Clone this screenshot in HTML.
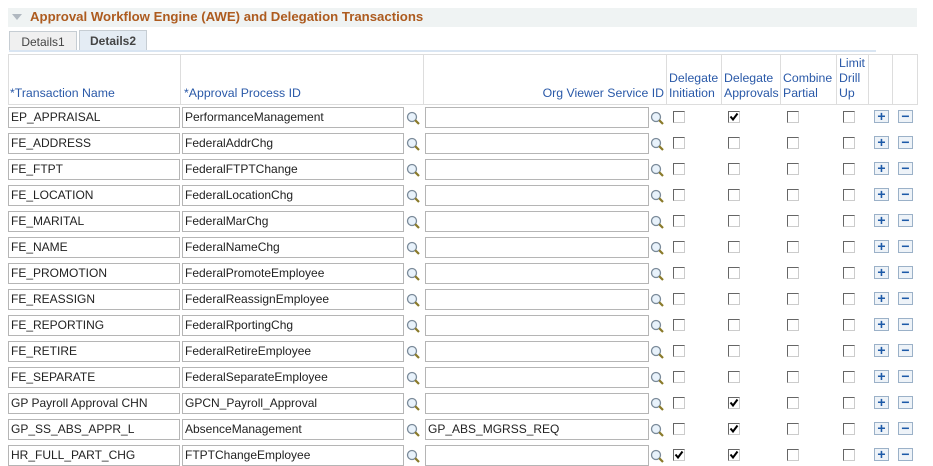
<!DOCTYPE html>
<html><head><style>
body{margin:0;width:933px;height:465px;background:#fff;font-family:"Liberation Sans",Arial,sans-serif;font-size:12px;position:relative;overflow:hidden}
.a{position:absolute}
.bar{left:8px;top:8px;width:909px;height:19px;background:#eff3f3}
.title{left:30px;top:9px;font-weight:bold;font-size:13.2px;color:#ad5b1f}
.tri{left:12px;top:14px;width:0;height:0;border-left:5px solid transparent;border-right:5px solid transparent;border-top:6px solid #b0b8c0}
.tab{top:30px;height:20px;border:1px solid #c6cdd3;border-bottom:none;line-height:20px;font-size:12px;color:#444;text-align:center;box-sizing:border-box}
.hdr{top:54px;height:51px;border:1px solid #ddd;box-sizing:border-box;background:#fff}
.hl{color:#2a59a8;font-size:12.3px;line-height:15px}
.inp{height:21px;border:1px solid #b5b5b5;box-sizing:border-box;padding-left:2px;line-height:19px;color:#222;background:#fff;white-space:nowrap;overflow:hidden}
.cb{width:12px;height:12px;border:1px solid #666;border-right-color:#ccc;border-bottom-color:#ccc;box-sizing:border-box;background:#fff}
.btn{width:15px;height:13px;border:1px solid #9bb1c8;box-sizing:border-box;background:#eef3f8;color:#1d5aa8;font-weight:bold;font-size:14px;line-height:10px;text-align:center}
</style></head><body>
<div class="a bar"></div><div class="a tri"></div>
<div class="a title">Approval Workflow Engine (AWE) and Delegation Transactions</div>
<div class="a tab" style="left:9px;width:68px;background:#f0f0f0;top:31px">Details1</div>
<div class="a tab" style="left:79px;width:68px;background:#e4ecf4;font-weight:bold;color:#444">Details2</div>
<div class="a" style="left:9px;top:50px;width:867px;height:2px;background:#d9e5f2"></div>
<div class="a hdr" style="left:8px;width:910px"></div>
<div class="a" style="left:180px;top:55px;width:1px;height:49px;background:#ddd"></div>
<div class="a" style="left:423px;top:55px;width:1px;height:49px;background:#ddd"></div>
<div class="a" style="left:666px;top:55px;width:1px;height:49px;background:#ddd"></div>
<div class="a" style="left:721px;top:55px;width:1px;height:49px;background:#ddd"></div>
<div class="a" style="left:780px;top:55px;width:1px;height:49px;background:#ddd"></div>
<div class="a" style="left:836px;top:55px;width:1px;height:49px;background:#ddd"></div>
<div class="a" style="left:868px;top:55px;width:1px;height:49px;background:#ddd"></div>
<div class="a" style="left:892px;top:55px;width:1px;height:49px;background:#ddd"></div>
<div class="a hl" style="left:10px;top:86px">*Transaction Name</div>
<div class="a hl" style="left:184px;top:86px">*Approval Process ID</div>
<div class="a hl" style="left:424px;top:86px;width:240px;text-align:right">Org Viewer Service ID</div>
<div class="a hl" style="left:669px;top:71px">Delegate<br>Initiation</div>
<div class="a hl" style="left:724px;top:71px">Delegate<br>Approvals</div>
<div class="a hl" style="left:783px;top:71px">Combine<br>Partial</div>
<div class="a hl" style="left:839px;top:56px">Limit<br>Drill<br>Up</div>
<svg width="0" height="0" style="position:absolute"><defs><g id="mg"><circle cx="6" cy="6" r="4.5" fill="#e8f2fb" stroke="#7a8a99" stroke-width="1.3"/><path d="M9.2 9.2 L13 13" stroke="#8a7a2a" stroke-width="2.2"/></g></defs></svg>
<div id="rows"></div>
<script>
var d=[["EP_APPRAISAL","PerformanceManagement","",0,1],["FE_ADDRESS","FederalAddrChg","",0,0],["FE_FTPT","FederalFTPTChange","",0,0],["FE_LOCATION","FederalLocationChg","",0,0],["FE_MARITAL","FederalMarChg","",0,0],["FE_NAME","FederalNameChg","",0,0],["FE_PROMOTION","FederalPromoteEmployee","",0,0],["FE_REASSIGN","FederalReassignEmployee","",0,0],["FE_REPORTING","FederalRportingChg","",0,0],["FE_RETIRE","FederalRetireEmployee","",0,0],["FE_SEPARATE","FederalSeparateEmployee","",0,0],["GP Payroll Approval CHN","GPCN_Payroll_Approval","",0,1],["GP_SS_ABS_APPR_L","AbsenceManagement","GP_ABS_MGRSS_REQ",0,1],["HR_FULL_PART_CHG","FTPTChangeEmployee","",1,1]];
var h="";
function cb(x,y,c){return '<div class="a cb" style="left:'+x+'px;top:'+y+'px">'+(c?'<svg width="10" height="10" style="position:absolute;left:0;top:0"><path d="M1.5 4.5 L4 7.5 L8.5 1.5" stroke="#000" stroke-width="2" fill="none"/></svg>':'')+'</div>';}
d.forEach(function(r,i){var y=107+26*i;
h+='<div class="a inp" style="left:8px;top:'+y+'px;width:172px">'+r[0]+'</div>';
h+='<div class="a inp" style="left:182px;top:'+y+'px;width:222px">'+r[1]+'</div>';
h+='<svg class="a" style="left:406px;top:'+(y+4)+'px" width="15" height="15"><use href="#mg"/></svg>';
h+='<div class="a inp" style="left:425px;top:'+y+'px;width:224px">'+r[2]+'</div>';
h+='<svg class="a" style="left:650px;top:'+(y+4)+'px" width="15" height="15"><use href="#mg"/></svg>';
h+=cb(673,y+4,r[3])+cb(728,y+4,r[4])+cb(787,y+4,0)+cb(843,y+4,0);
h+='<div class="a btn" style="left:874px;top:'+(y+3)+'px">+</div>';
h+='<div class="a btn" style="left:898px;top:'+(y+3)+'px">&minus;</div>';
});
document.getElementById("rows").innerHTML=h;
</script>
</body></html>
